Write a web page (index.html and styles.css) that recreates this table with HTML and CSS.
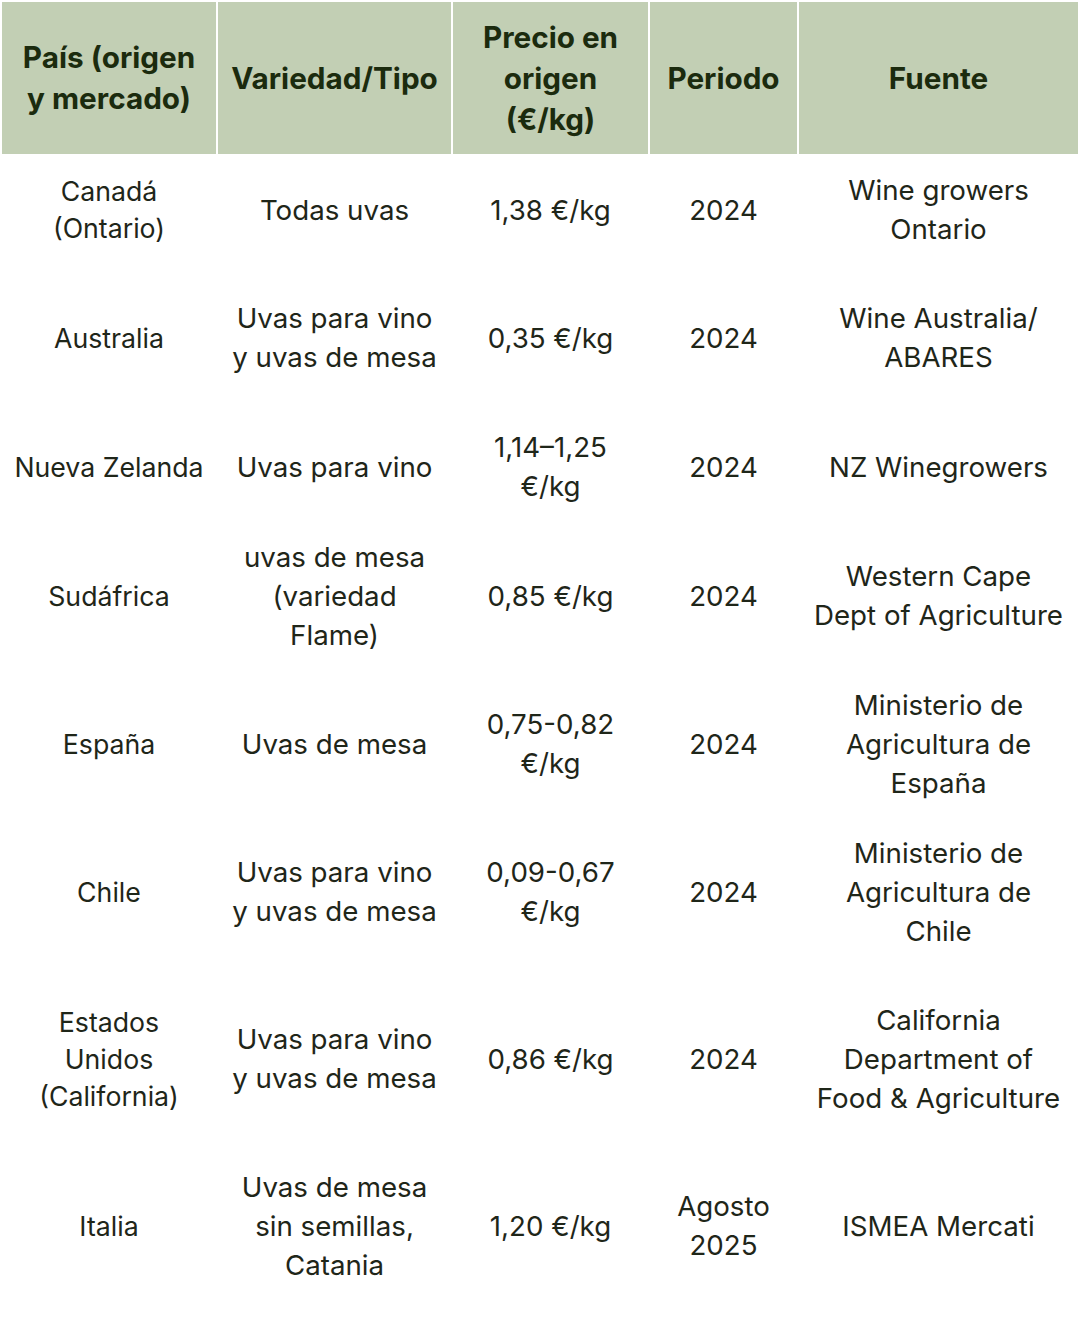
FILE: index.html
```html
<!DOCTYPE html>
<html lang="es">
<head>
<meta charset="utf-8">
<title>Precios de uva</title>
<link rel="stylesheet" href="styles.css">
</head>
<body>
<table class="prices">
  <colgroup>
    <col class="c1"><col class="c2"><col class="c3"><col class="c4"><col class="c5">
  </colgroup>
  <thead>
    <tr>
      <th>País (origen<br>y mercado)</th>
      <th>Variedad/Tipo</th>
      <th>Precio en<br>origen<br>(€/kg)</th>
      <th>Periodo</th>
      <th>Fuente</th>
    </tr>
  </thead>
  <tbody>
    <tr class="r1">
      <td class="country">Canadá<br>(Ontario)</td>
      <td>Todas uvas</td>
      <td>1,38 €/kg</td>
      <td>2024</td>
      <td>Wine growers<br>Ontario</td>
    </tr>
    <tr class="r2">
      <td class="country">Australia</td>
      <td>Uvas para vino<br>y uvas de mesa</td>
      <td>0,35 €/kg</td>
      <td>2024</td>
      <td>Wine Australia/<br>ABARES</td>
    </tr>
    <tr class="r3">
      <td class="country">Nueva Zelanda</td>
      <td>Uvas para vino</td>
      <td>1,14–1,25<br>€/kg</td>
      <td>2024</td>
      <td>NZ Winegrowers</td>
    </tr>
    <tr class="r4">
      <td class="country">Sudáfrica</td>
      <td>uvas de mesa<br>(variedad<br>Flame)</td>
      <td>0,85 €/kg</td>
      <td>2024</td>
      <td>Western Cape<br>Dept of Agriculture</td>
    </tr>
    <tr class="r5">
      <td class="country">España</td>
      <td>Uvas de mesa</td>
      <td>0,75-0,82<br>€/kg</td>
      <td>2024</td>
      <td>Ministerio de<br>Agricultura de<br>España</td>
    </tr>
    <tr class="r6">
      <td class="country">Chile</td>
      <td>Uvas para vino<br>y uvas de mesa</td>
      <td>0,09-0,67<br>€/kg</td>
      <td>2024</td>
      <td>Ministerio de<br>Agricultura de<br>Chile</td>
    </tr>
    <tr class="r7">
      <td class="country">Estados<br>Unidos<br>(California)</td>
      <td>Uvas para vino<br>y uvas de mesa</td>
      <td>0,86 €/kg</td>
      <td>2024</td>
      <td>California<br>Department of<br>Food &amp; Agriculture</td>
    </tr>
    <tr class="r8">
      <td class="country">Italia</td>
      <td>Uvas de mesa<br>sin semillas,<br>Catania</td>
      <td>1,20 €/kg</td>
      <td>Agosto<br>2025</td>
      <td>ISMEA Mercati</td>
    </tr>
  </tbody>
</table>
</body>
</html>
```

FILE: styles.css
```css
html, body {
  margin: 0;
  padding: 0;
  background: #ffffff;
}

.prices {
  border-collapse: separate;
  border-spacing: 2px;
  table-layout: fixed;
  width: 1080px;
  font-family: Inter, "Noto Sans", sans-serif;
}

.c1 { width: 214px; }
.c2 { width: 233px; }
.c3 { width: 195px; }
.c4 { width: 147px; }
.c5 { width: 279px; }

.prices th {
  background: #c2cfb4;
  color: #1b2b0e;
  font-weight: 700;
  font-size: 29.7px;
  line-height: 41px;
  height: 152px;
  padding: 0;
  text-align: center;
  vertical-align: middle;
}

.prices td {
  padding: 0;
  text-align: center;
  vertical-align: middle;
  color: #1f2619;
  font-size: 27.7px;
  line-height: 39px;
  font-weight: 400;
  white-space: nowrap;
}

.prices td.country {
  font-size: 26.7px;
  line-height: 37px;
}

.r1 td { height: 108px; }
.r2 td { height: 144px; }
.r3 td { height: 110px; }
.r4 td { height: 144px; }
.r5 td { height: 148px; }
.r6 td { height: 144px; }
.r7 td { height: 186px; }
.r8 td { height: 144px; }
```
